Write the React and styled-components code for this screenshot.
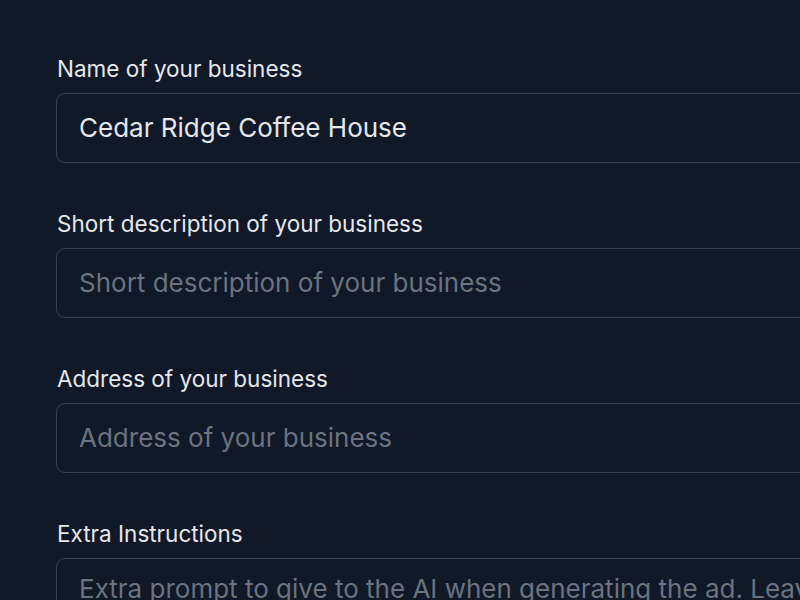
import React from 'react'
import styled, { createGlobalStyle } from 'styled-components'

const GlobalStyle = createGlobalStyle`
  html, body {
    margin: 0;
    background: #111827;
    overflow: hidden;
  }
  * { box-sizing: border-box; }
`

const Page = styled.div`
  width: 800px;
  height: 600px;
  overflow: hidden;
  padding: 54px 0 0 56px;
  font-family: Inter, "Noto Sans", sans-serif;
`

const Form = styled.form`
  width: 1100px;
  display: flex;
  flex-direction: column;
  gap: 46px;
`

const Field = styled.div`
  display: flex;
  flex-direction: column;
  gap: 9px;
`

const Label = styled.label`
  font-size: 22.5px;
  font-weight: 400;
  line-height: 30px;
  color: #e5e7eb;
  padding-left: 1px;
`

const Input = styled.input`
  height: 70px;
  width: 100%;
  background: transparent;
  border: 1.5px solid #374151;
  border-radius: 9px;
  padding: 0 22px 2px;
  font-family: inherit;
  font-size: 26px;
  color: #e5e7eb;
  outline: none;

  &::placeholder {
    color: #6b7280;
  }
`

const TextArea = styled.textarea`
  height: 140px;
  width: 100%;
  background: transparent;
  border: 1.5px solid #374151;
  border-radius: 9px;
  padding: 14px 22px;
  font-family: inherit;
  font-size: 26px;
  color: #e5e7eb;
  outline: none;
  resize: none;

  &::placeholder {
    color: #6b7280;
  }
`

const App = () => {
  return (
    <Page>
      <GlobalStyle />
      <Form>
        <Field>
          <Label>Name of your business</Label>
          <Input defaultValue="Cedar Ridge Coffee House" />
        </Field>
        <Field>
          <Label>Short description of your business</Label>
          <Input placeholder="Short description of your business" />
        </Field>
        <Field>
          <Label>Address of your business</Label>
          <Input placeholder="Address of your business" />
        </Field>
        <Field>
          <Label>Extra Instructions</Label>
          <TextArea placeholder="Extra prompt to give to the AI when generating the ad. Leave empty if none." />
        </Field>
      </Form>
    </Page>
  )
}

export default App
